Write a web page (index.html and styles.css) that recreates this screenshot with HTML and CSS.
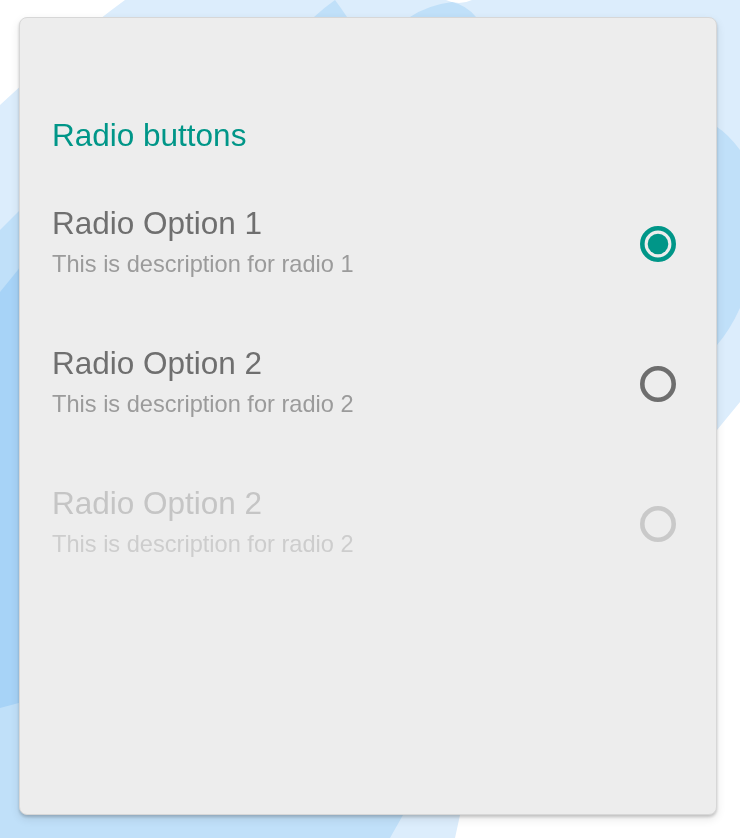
FILE: index.html
```html
<!DOCTYPE html>
<html lang="en">
<head>
<meta charset="utf-8">
<title>Radio buttons</title>
<link rel="stylesheet" href="styles.css">
</head>
<body>
<svg class="backdrop" width="740" height="838" viewBox="0 0 740 838" aria-hidden="true">
  <path class="bg-light" d="M125,0 L740,0 L740,402 L717,430 L460,815 L455,838 L0,838 L0,105 Q70,40 125,0 Z"/>
  <path class="bg-white" d="M446,0 Q459,6 472,0 Z"/>
  <path class="bg-mid" d="M314,17 Q325,7 335,0 Q341,8 347,17 L347,40 L314,40 Z"/>
  <path class="bg-mid" d="M410,17 Q428,5 452,2 Q466,5 476,17 L476,40 L410,40 Z"/>
  <path class="bg-mid" d="M740,150 Q728,134 717,127 L690,127 L690,345 L717,345 Q730,330 740,308 Z"/>
  <path class="bg-mid" d="M0,230 L30,200 L30,790 L405,790 L403,815 L390,838 L0,838 Z"/>
  <path class="bg-dark" d="M0,292 L30,255 L30,700 L0,708 Z"/>
</svg>

<main class="card">
  <h1 class="card-title">Radio buttons</h1>
  <ul class="options">
    <li class="option">
      <div class="option-text">
        <div class="option-label">Radio Option 1</div>
        <div class="option-desc">This is description for radio 1</div>
      </div>
      <svg class="radio radio-checked" width="36" height="36" viewBox="0 0 36 36">
        <circle cx="18" cy="18" r="15.7" fill="none" stroke-width="4.6"/>
        <circle class="dot" cx="18" cy="18" r="10.3"/>
      </svg>
    </li>
    <li class="option">
      <div class="option-text">
        <div class="option-label">Radio Option 2</div>
        <div class="option-desc">This is description for radio 2</div>
      </div>
      <svg class="radio radio-off" width="36" height="36" viewBox="0 0 36 36">
        <circle cx="18" cy="18" r="15.7" fill="none" stroke-width="4.6"/>
      </svg>
    </li>
    <li class="option option-disabled">
      <div class="option-text">
        <div class="option-label">Radio Option 2</div>
        <div class="option-desc">This is description for radio 2</div>
      </div>
      <svg class="radio radio-disabled" width="36" height="36" viewBox="0 0 36 36">
        <circle cx="18" cy="18" r="15.7" fill="none" stroke-width="4.6"/>
      </svg>
    </li>
  </ul>
</main>
</body>
</html>
```

FILE: styles.css
```css
* {
  box-sizing: border-box;
}

html,
body {
  margin: 0;
  padding: 0;
}

body {
  width: 740px;
  height: 838px;
  overflow: hidden;
  background: #ffffff;
  font-family: "Liberation Sans", Arial, sans-serif;
}

.backdrop {
  position: fixed;
  left: 0;
  top: 0;
  z-index: 0;
  display: block;
}

.bg-light { fill: #dcedfc; }
.bg-white { fill: #ffffff; }
.bg-mid { fill: #c0e0f9; }
.bg-dark { fill: #a7d3f7; }

.card {
  position: relative;
  z-index: 1;
  margin: 17px 0 0 19px;
  width: 698px;
  height: 798px;
  background: #ededed;
  border: 1px solid #d7d7d7;
  border-radius: 8px;
  box-shadow: 0 2px 3px rgba(0, 0, 0, 0.18), 0 4px 10px rgba(0, 0, 0, 0.1);
  padding: 97px 40px 0 32px;
}

.card-title {
  margin: 0 0 48px;
  font-size: 31.5px;
  line-height: 40px;
  font-weight: normal;
  color: #009688;
}

.options {
  list-style: none;
  margin: 0;
  padding: 0;
  display: flex;
  flex-direction: column;
  gap: 64px;
}

.option {
  display: flex;
  align-items: center;
  justify-content: space-between;
}

.option-label {
  font-size: 31.5px;
  line-height: 40px;
  color: #6f6f6f;
}

.option-desc {
  margin-top: 6px;
  font-size: 23.6px;
  line-height: 30px;
  color: #9b9b9b;
}

.option-disabled .option-label {
  color: #c5c5c5;
}

.option-disabled .option-desc {
  color: #cdcdcd;
}

.radio {
  display: block;
  flex: none;
  margin-top: 6px;
}

.radio-checked circle { stroke: #009688; }
.radio-checked .dot { fill: #009688; stroke: none; }
.radio-off circle { stroke: #6e6e6e; }
.radio-disabled circle { stroke: #c9c9c9; }
```
